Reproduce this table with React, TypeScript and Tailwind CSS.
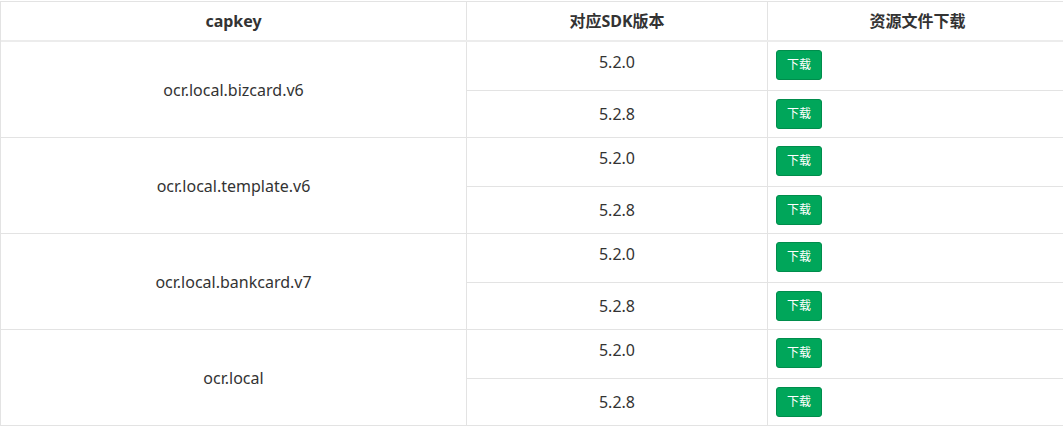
const groups = [
  { capkey: "ocr.local.bizcard.v6", versions: ["5.2.0", "5.2.8"] },
  { capkey: "ocr.local.template.v6", versions: ["5.2.0", "5.2.8"] },
  { capkey: "ocr.local.bankcard.v7", versions: ["5.2.0", "5.2.8"] },
  { capkey: "ocr.local", versions: ["5.2.0", "5.2.8"] },
];

const DownloadButton = () => (
  <button className="h-[30px] w-[46px] rounded-[3px] border border-[#008d4c] bg-[#00a65a] text-[12px] leading-none text-white">
    下载
  </button>
);

const App = () => {
  return (
    <div className="h-[428px] w-[1063px] overflow-hidden bg-white pt-[1px] text-[16px] text-[#333] [font-family:'Noto_Sans','Noto_Sans_CJK_SC',sans-serif]">
      <div className="w-[1100px] border-l border-t border-[#e3e3e3]">
        {/* header */}
        <div className="flex h-[40px] border-b-2 border-[#ececec] font-bold">
          <div className="flex w-[466px] items-center justify-center border-r border-[#e3e3e3]">
            capkey
          </div>
          <div className="flex w-[301px] items-center justify-center border-r border-[#e3e3e3]">
            对应SDK版本
          </div>
          <div className="flex w-[300px] items-center justify-center border-r border-[#e3e3e3]">
            资源文件下载
          </div>
        </div>
        {groups.map((g) => (
          <div key={g.capkey} className="flex border-b border-[#e3e3e3]">
            <div className="flex w-[466px] items-center justify-center border-r border-[#e3e3e3]">
              {g.capkey}
            </div>
            <div className="flex flex-col">
              {g.versions.map((v, i) => (
                <div
                  key={v}
                  className={`flex ${i === 0 ? "h-[49px] border-b border-[#e3e3e3]" : "h-[46px]"}`}
                >
                  <div
                    className={`flex w-[301px] justify-center border-r border-[#e3e3e3] leading-[22px] ${
                      i === 0 ? "items-start pt-[9px]" : "items-center"
                    }`}
                  >
                    {v}
                  </div>
                  <div className="flex w-[300px] items-start px-2 pt-2">
                    <DownloadButton />
                  </div>
                </div>
              ))}
            </div>
          </div>
        ))}
      </div>
    </div>
  );
};

export default App;
